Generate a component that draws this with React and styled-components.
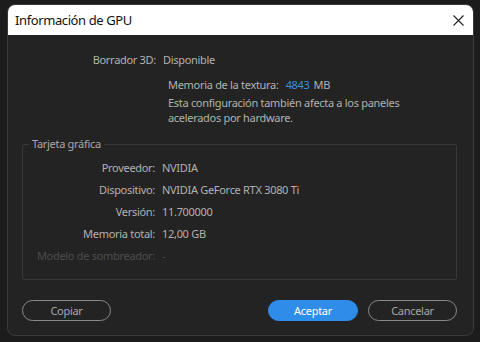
import React from 'react';
import styled, { createGlobalStyle } from 'styled-components';

const GlobalStyle = createGlobalStyle`
  html, body {
    margin: 0;
    padding: 0;
    background: #1c1c1c;
    overflow: hidden;
  }
  body {
    font-family: "Noto Sans", "Open Sans", sans-serif;
    letter-spacing: -0.3px;
  }
`;

const Screen = styled.div`
  width: 480px;
  height: 342px;
  padding: 4px 6px 0 7px;
  box-sizing: border-box;
`;

const Dialog = styled.div`
  width: 467px;
  height: 332px;
  box-sizing: border-box;
  border-radius: 8px;
  border: 1px solid #3a3a3a;
  background: #232323;
  overflow: hidden;
  display: flex;
  flex-direction: column;
`;

const TitleBar = styled.div`
  height: 30px;
  flex: none;
  background: #ffffff;
  display: flex;
  align-items: center;
  justify-content: space-between;
  padding: 0 9px 0 7px;
`;

const Title = styled.div`
  font-size: 13px;
  letter-spacing: -0.4px;
  color: #111;
`;

const CloseButton = styled.div`
  width: 12px;
  height: 12px;
  display: flex;
  align-items: center;
  justify-content: center;
`;

const Body = styled.div`
  flex: 1;
  display: flex;
  flex-direction: column;
  padding: 17px 16px 0 14px;
`;

const Row = styled.div`
  display: grid;
  grid-template-columns: ${p => p.$labelWidth || 134}px 1fr;
  column-gap: 7px;
  line-height: 16px;
  font-size: 11px;
  color: ${p => (p.$dim ? '#4c4c4c' : '#b2b2b2')};
  margin-top: ${p => p.$top || 0}px;
`;

const Label = styled.span`
  text-align: right;
  white-space: nowrap;
`;

const Value = styled.span`
  white-space: nowrap;
`;

const Texture = styled.div`
  padding-left: 146px;
  margin-top: 9px;
  font-size: 11px;
  color: #b2b2b2;
`;

const TextureLine = styled.div`
  line-height: 16px;
  white-space: nowrap;
`;

const Number = styled.span`
  color: #3d8fe3;
  margin: 0 4px 0 7px;
`;

const Note = styled.div`
  margin-top: 2px;
  line-height: 15px;
`;

const Group = styled.fieldset`
  margin: 11px 0 0 0;
  padding: 0 0 15px 0;
  border: 1px solid #393939;
  border-radius: 2px;
  min-width: 0;
`;

const Legend = styled.legend`
  margin-left: 6px;
  padding: 0 3px;
  font-size: 11px;
  line-height: 16px;
  color: #a8a8a8;
`;

const Rows = styled.div`
  display: flex;
  flex-direction: column;
  gap: 6px;
  padding-top: 8px;
`;

const Footer = styled.div`
  display: flex;
  align-items: center;
  gap: 10px;
  margin-top: 20px;
`;

const Button = styled.button`
  width: ${p => p.$width || 89}px;
  height: 21px;
  box-sizing: border-box;
  border-radius: 11px;
  border: 1px solid ${p => (p.$primary ? '#2f8ce8' : '#8a8a8a')};
  background: ${p => (p.$primary ? '#2f8ce8' : 'transparent')};
  color: ${p => (p.$primary ? '#ffffff' : '#a8a8a8')};
  font-family: inherit;
  letter-spacing: inherit;
  font-size: 11px;
  padding: 0;
  margin-left: ${p => (p.$push ? 'auto' : '0')};
`;

const rows = [
  { label: 'Proveedor:', value: 'NVIDIA' },
  { label: 'Dispositivo:', value: 'NVIDIA GeForce RTX 3080 Ti' },
  { label: 'Versión:', value: '11.700000' },
  { label: 'Memoria total:', value: '12,00 GB' },
  { label: 'Modelo de sombreador:', value: '-', dim: true },
];

const App = () => {
  return (
    <Screen>
      <GlobalStyle />
      <Dialog>
        <TitleBar>
          <Title>Información de GPU</Title>
          <CloseButton>
            <svg width="11" height="11" viewBox="0 0 11 11">
              <path d="M0.5 0.5 L10.5 10.5 M10.5 0.5 L0.5 10.5" stroke="#222" strokeWidth="1.1" fill="none" />
            </svg>
          </CloseButton>
        </TitleBar>
        <Body>
          <Row>
            <Label>Borrador 3D:</Label>
            <Value>Disponible</Value>
          </Row>
          <Texture>
            <TextureLine>
              Memoria de la textura:<Number>4843</Number>MB
            </TextureLine>
            <Note>
              Esta configuración también afecta a los paneles
              <br />
              acelerados por hardware.
            </Note>
          </Texture>
          <Group>
            <Legend>Tarjeta gráfica</Legend>
            <Rows>
              {rows.map(r => (
                <Row key={r.label} $labelWidth={132} $dim={r.dim}>
                  <Label>{r.label}</Label>
                  <Value>{r.value}</Value>
                </Row>
              ))}
            </Rows>
          </Group>
          <Footer>
            <Button>Copiar</Button>
            <Button $primary $push $width={90}>Aceptar</Button>
            <Button>Cancelar</Button>
          </Footer>
        </Body>
      </Dialog>
    </Screen>
  );
};

export default App;
